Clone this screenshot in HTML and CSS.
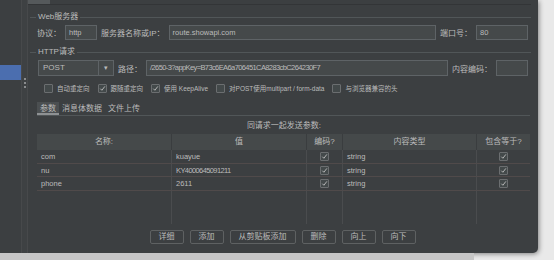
FILE: index.html
```html
<!DOCTYPE html>
<html lang="zh-CN">
<head>
  <meta charset="UTF-8" />
  <title>HTTP请求</title>
  <link rel="stylesheet" href="styles.css">
</head>
<body>
  <div class="window">
    <aside class="sidebar"><div class="sidebar-sel"></div></aside>
    <div class="splitter"><span></span><span></span><span></span></div>

    <main class="main">
      <div class="topbar"><div class="toptab"></div></div>

      <div class="group-title"><span>Web服务器</span></div>
      <div class="row row-web">
        <label>协议：</label>
        <div class="field w-proto">http</div>
        <label>服务器名称或IP：</label>
        <div class="field grow">route.showapi.com</div>
        <label>端口号：</label>
        <div class="field w-port">80</div>
      </div>

      <div class="group-title"><span>HTTP请求</span></div>
      <div class="row row-http">
        <div class="combo">
          <div class="combo-text">POST</div>
          <div class="combo-arrow">&#9662;</div>
        </div>
        <label>路径：</label>
        <div class="field grow tight">/2650-3?appKey=B73c6EA6a706451CA8283cbC264230F7</div>
        <label>内容编码：</label>
        <div class="field w-enc"></div>
      </div>

      <div class="checks">
        <div class="check"><span class="cb"></span>自动重定向</div>
        <div class="check"><span class="cb on"><svg viewBox="0 0 8 8"><path d="M1.5 4.2 L3.3 6 L6.7 1.6"/></svg></span>跟随重定向</div>
        <div class="check"><span class="cb on"><svg viewBox="0 0 8 8"><path d="M1.5 4.2 L3.3 6 L6.7 1.6"/></svg></span>使用 KeepAlive</div>
        <div class="check"><span class="cb"></span>对POST使用multipart / form-data</div>
        <div class="check"><span class="cb"></span>与浏览器兼容的头</div>
      </div>

      <div class="tabs">
        <div class="tab active">参数</div>
        <div class="tab">消息体数据</div>
        <div class="tab">文件上传</div>
      </div>

      <div class="caption">同请求一起发送参数:</div>

      <div class="table">
        <div class="th">名称:</div>
        <div class="th">值</div>
        <div class="th">编码?</div>
        <div class="th">内容类型</div>
        <div class="th last">包含等于?</div>

        <div class="td">com</div>
        <div class="td">kuayue</div>
        <div class="td mid"><span class="cb on"><svg viewBox="0 0 8 8"><path d="M1.5 4.2 L3.3 6 L6.7 1.6"/></svg></span></div>
        <div class="td">string</div>
        <div class="td mid last"><span class="cb on"><svg viewBox="0 0 8 8"><path d="M1.5 4.2 L3.3 6 L6.7 1.6"/></svg></span></div>

        <div class="td">nu</div>
        <div class="td tight">KY4000645091211</div>
        <div class="td mid"><span class="cb on"><svg viewBox="0 0 8 8"><path d="M1.5 4.2 L3.3 6 L6.7 1.6"/></svg></span></div>
        <div class="td">string</div>
        <div class="td mid last"><span class="cb on"><svg viewBox="0 0 8 8"><path d="M1.5 4.2 L3.3 6 L6.7 1.6"/></svg></span></div>

        <div class="td">phone</div>
        <div class="td">2611</div>
        <div class="td mid"><span class="cb on"><svg viewBox="0 0 8 8"><path d="M1.5 4.2 L3.3 6 L6.7 1.6"/></svg></span></div>
        <div class="td">string</div>
        <div class="td mid last"><span class="cb on"><svg viewBox="0 0 8 8"><path d="M1.5 4.2 L3.3 6 L6.7 1.6"/></svg></span></div>

        <div class="fill"></div>
        <div class="fill"></div>
        <div class="fill"></div>
        <div class="fill"></div>
        <div class="fill last"></div>
      </div>

      <div class="buttons">
        <button class="btn">详细</button>
        <button class="btn">添加</button>
        <button class="btn">从剪贴板添加</button>
        <button class="btn">删除</button>
        <button class="btn">向上</button>
        <button class="btn">向下</button>
      </div>
    </main>
  </div>
  <div class="footer"></div>
</body>
</html>
```

FILE: styles.css
```css
* {
  box-sizing: border-box;
}
html, body {
  margin: 0;
  padding: 0;
}
body {
  width: 554px;
  height: 260px;
  overflow: hidden;
  background: #e9e9e9;
  font-family: "Liberation Sans", "Noto Sans CJK SC", sans-serif;
  font-size: 8px;
  color: #bbbbbb;
}
.window {
  width: 538px;
  height: 253px;
  display: flex;
  background: #3c3f41;
  border-bottom-right-radius: 5px;
  box-shadow: 1px 1px 5px rgba(0, 0, 0, 0.45);
}
.footer {
  width: 474px;
  height: 7px;
  background: #c6c6c6;
}
.sidebar {
  width: 21px;
  padding-top: 65px;
}
.sidebar-sel {
  height: 15px;
  background: #4b6eaf;
}
.splitter {
  width: 7px;
  border-left: 1px solid #47494b;
  border-right: 1px solid #47494b;
  background: #3e4143;
  display: flex;
  flex-direction: column;
  align-items: center;
  gap: 2px;
  padding-top: 78px;
}
.splitter span {
  width: 2px;
  height: 2px;
  background: #8a8c8e;
}
.main {
  flex: 1;
  padding: 0 7px 0 2px;
  display: flex;
  flex-direction: column;
}
.topbar {
  height: 5px;
  margin-left: -2px;
  border-bottom: 1px solid #333537;
}
.toptab {
  width: 22px;
  height: 4px;
  background: #55595b;
}
.group-title {
  display: flex;
  align-items: center;
  height: 10px;
  margin-top: 7px;
  line-height: 10px;
}
.group-title::before {
  content: "";
  width: 6px;
  height: 1px;
  background: #515658;
}
.group-title::after {
  content: "";
  flex: 1;
  height: 1px;
  background: #515658;
}
.group-title span {
  padding: 0 2px;
}
.row {
  display: flex;
  align-items: center;
  gap: 4px;
  margin: 3px 3px 0 7px;
}
.row-web {
  height: 15px;
}
.row-http {
  height: 16px;
}
.field {
  height: 100%;
  background: #45494a;
  border: 1px solid #5e6366;
  padding: 0 3px;
  font-size: 7.5px;
  line-height: 13px;
  white-space: nowrap;
  overflow: hidden;
}
.tight {
  letter-spacing: -0.6px;
}
.grow {
  flex: 1;
}
.w-proto {
  width: 32px;
}
.w-port {
  width: 52px;
}
.w-enc {
  width: 32px;
}
.combo {
  width: 76px;
  height: 100%;
  display: flex;
  margin-left: 1px;
  background: #45494a;
  border: 1px solid #5e6366;
  line-height: 14px;
}
.combo-text {
  flex: 1;
  padding-left: 4px;
}
.combo-arrow {
  width: 15px;
  border-left: 1px solid #5e6366;
  text-align: center;
  font-size: 7px;
}
.checks {
  display: flex;
  align-items: center;
  gap: 8px;
  height: 10px;
  margin: 7px 0 0 14px;
  font-size: 6.5px;
}
.check {
  display: flex;
  align-items: center;
  gap: 4px;
}
.cb {
  width: 9px;
  height: 9px;
  border: 1px solid #6b6e70;
  border-radius: 1px;
  background: #43494a;
  display: inline-flex;
  align-items: center;
  justify-content: center;
}
.cb svg {
  width: 7px;
  height: 7px;
}
.cb path {
  fill: none;
  stroke: #c4c4c4;
  stroke-width: 1;
}
.tabs {
  display: flex;
  height: 14px;
  margin: 9px 1px 0 7px;
  border-bottom: 1px solid #515658;
}
.tab {
  padding: 0 3px;
  line-height: 13px;
}
.tab.active {
  background: #4b4f51;
  box-shadow: inset 0 -2px #8e9193;
}
.caption {
  margin-top: 5px;
  height: 10px;
  line-height: 10px;
  text-align: center;
  margin-left: 7px;
}
.table {
  display: grid;
  grid-template-columns: 135px 135px 36px 134px 1fr;
  grid-template-rows: 16px 14px 13px 14px 1fr;
  height: 90px;
  margin: 3px 1px 0 7px;
}
.th {
  background: #45494a;
  border-right: 1px solid #3a3d3f;
  text-align: center;
  line-height: 16px;
}
.td {
  border-right: 1px solid #4a4c4e;
  border-bottom: 1px solid #504a4a;
  padding-left: 4px;
  font-size: 7.5px;
  line-height: 13px;
  white-space: nowrap;
}
.td.mid {
  padding-left: 0;
  display: flex;
  align-items: center;
  justify-content: center;
}
.fill {
  border-right: 1px solid #4a4c4e;
}
.last {
  border-right: none;
}
.buttons {
  display: flex;
  justify-content: center;
  gap: 6px;
  margin: 6px 3px 0 7px;
}
.btn {
  height: 14px;
  padding: 0 8px;
  background: #3c3f41;
  border: 1px solid #5e6162;
  border-radius: 2px;
  color: #bbbbbb;
  font-family: inherit;
  font-size: 8px;
  line-height: 12px;
}
```
